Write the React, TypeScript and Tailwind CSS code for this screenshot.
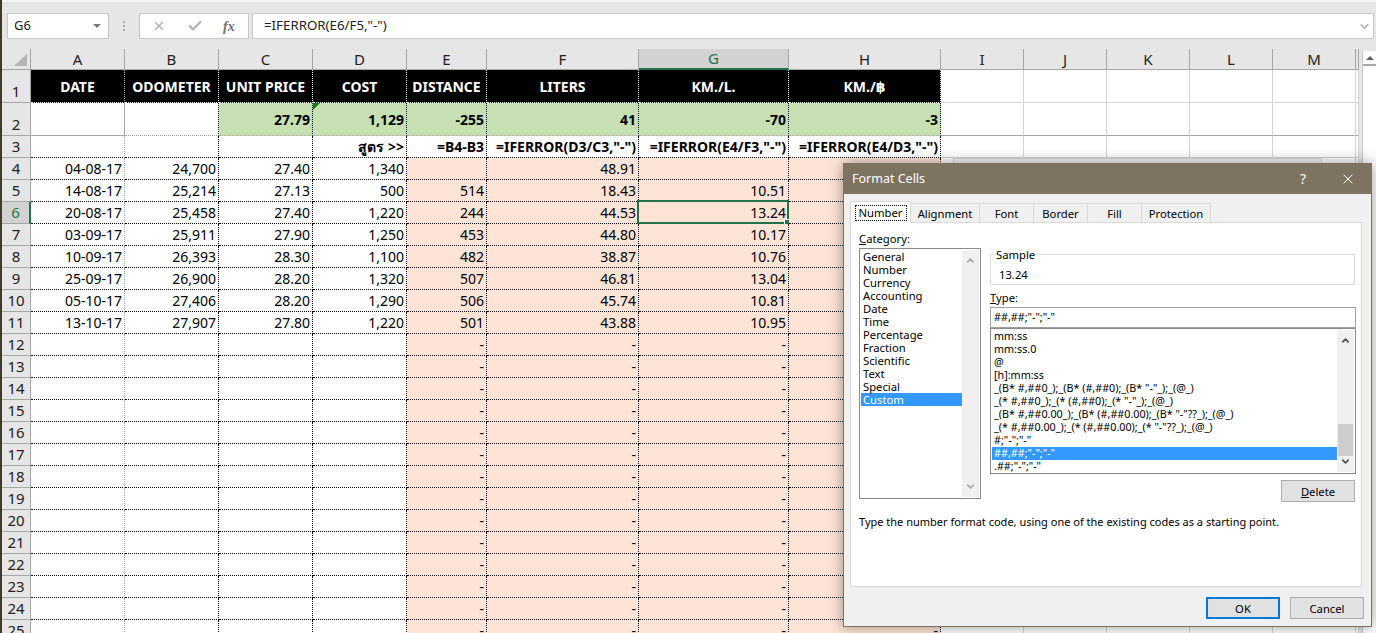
import { Check, ChevronDown, ChevronUp, X } from "lucide-react";

const columns = ["A", "B", "C", "D", "E", "F", "G", "H", "I", "J", "K", "L", "M", ""];

const headings = ["DATE", "ODOMETER", "UNIT PRICE", "COST", "DISTANCE", "LITERS", "KM./L.", "KM./฿"];
const totals = ["", "", "27.79", "1,129", "-255", "41", "-70", "-3"];
const formulas = ["", "", "", "สูตร >>", "=B4-B3", '=IFERROR(D3/C3,"-")', '=IFERROR(E4/F3,"-")', '=IFERROR(E4/D3,"-")'];

const records = [
  ["04-08-17", "24,700", "27.40", "1,340", "", "48.91", "", ""],
  ["14-08-17", "25,214", "27.13", "500", "514", "18.43", "10.51", ""],
  ["20-08-17", "25,458", "27.40", "1,220", "244", "44.53", "13.24", ""],
  ["03-09-17", "25,911", "27.90", "1,250", "453", "44.80", "10.17", ""],
  ["10-09-17", "26,393", "28.30", "1,100", "482", "38.87", "10.76", ""],
  ["25-09-17", "26,900", "28.20", "1,320", "507", "46.81", "13.04", ""],
  ["05-10-17", "27,406", "28.20", "1,290", "506", "45.74", "10.81", ""],
  ["13-10-17", "27,907", "27.80", "1,220", "501", "43.88", "10.95", ""],
];

const categories = ["General", "Number", "Currency", "Accounting", "Date", "Time", "Percentage", "Fraction", "Scientific", "Text", "Special", "Custom"];

const formats = [
  "mm:ss",
  "mm:ss.0",
  "@",
  "[h]:mm:ss",
  '_(B* #,##0_);_(B* (#,##0);_(B* "-"_);_(@_)',
  '_(* #,##0_);_(* (#,##0);_(* "-"_);_(@_)',
  '_(B* #,##0.00_);_(B* (#,##0.00);_(B* "-"??_);_(@_)',
  '_(* #,##0.00_);_(* (#,##0.00);_(* "-"??_);_(@_)',
  '#;"-";"-"',
  '##,##;"-";"-"',
  '.##;"-";"-"',
];

const tabs = [
  { label: "Alignment", width: "w-[69px]" },
  { label: "Font", width: "w-[54px]" },
  { label: "Border", width: "w-[54px]" },
  { label: "Fill", width: "w-[54px]" },
  { label: "Protection", width: "w-[69px]" },
];

function rightBorder(col: number, row: number) {
  if (col === 0) return "border-r border-r-[#a6a6a6]";
  if (col >= 8) return "border-r border-r-[#d4d4d4]";
  return row === 1 ? "border-r border-dotted border-r-white" : "border-r border-dotted border-r-black";
}

function bottomBorder(col: number, row: number) {
  if (row === 2) return "border-b border-b-[#a6a6a6]";
  if (col >= 8) return "border-b border-b-[#d4d4d4]";
  return row === 1 ? "border-b border-dotted border-b-white" : "border-b border-dotted border-b-black";
}

function fill(col: number, row: number) {
  if (col >= 8) return "bg-white";
  if (row === 1) return "bg-black text-white";
  if (row === 2) return col >= 2 ? "bg-[#c6e0b4]" : "bg-white";
  if (row === 3) return "bg-white";
  return col >= 4 ? "bg-[#fde4d6]" : "bg-white";
}

function cellText(col: number, row: number) {
  if (col >= 8) return "";
  if (row === 1) return headings[col];
  if (row === 2) return totals[col];
  if (row === 3) return formulas[col];
  if (row <= 11) return records[row - 4][col];
  return col >= 4 ? "-" : "";
}

function Cell({ col, row }: { col: number; row: number }) {
  const align = row === 1 ? "justify-center font-bold" : row <= 3 ? "justify-end pr-[2px] font-bold" : "justify-end pr-[2px]";
  return (
    <div className={`relative flex items-center whitespace-nowrap text-[14px] text-black ${align} ${fill(col, row)} ${rightBorder(col, row)} ${bottomBorder(col, row)}`}>
      {cellText(col, row)}
      {row === 2 && col === 3 && (
        <svg viewBox="0 0 7 7" className="absolute left-0 top-0 size-[7px]">
          <polygon points="0,0 7,0 0,7" fill="#0b7d0b" />
        </svg>
      )}
      {row === 6 && col === 6 && (
        <div className="absolute -left-[2px] -right-[1px] -top-[2px] -bottom-[1px] border-2 border-[#217346]">
          <div className="absolute -bottom-[3px] -right-[3px] size-[6px] border border-white bg-[#217346]" />
        </div>
      )}
    </div>
  );
}

function ColumnHeader({ label, active }: { label: string; active: boolean }) {
  return (
    <div
      className={
        active
          ? "flex items-center justify-center border-b-2 border-r border-b-[#217346] border-r-[#a6a6a6] bg-[#d2d2d2] text-[15px] text-[#217346]"
          : "flex items-center justify-center border-b border-r border-b-[#a6a6a6] border-r-[#a6a6a6] text-[15px] text-[#222222]"
      }
    >
      {label}
    </div>
  );
}

function RowHeader({ row }: { row: number }) {
  return (
    <div
      className={
        row === 6
          ? "flex items-end justify-center border-b border-r-2 border-b-[#a6a6a6] border-r-[#217346] bg-[#d2d2d2] text-[15px] leading-[21px] text-[#217346]"
          : "flex items-end justify-center border-b border-r border-[#a6a6a6] text-[15px] leading-[21px] text-[#222222]"
      }
    >
      {row}
    </div>
  );
}

function FormulaBar() {
  return (
    <div className="flex h-[49px] shrink-0 border-t-2 border-t-[#f4f4f4] pl-[5px] pt-[11px]">
      <div className="flex h-[26px] w-[102px] items-center justify-between border border-[#c8c8c8] bg-white pl-[6px] pr-[7px] text-[13px] text-[#222222]">
        G6
        <div className="h-0 w-0 border-x-[4px] border-t-[4px] border-x-transparent border-t-[#777777]" />
      </div>
      <div className="ml-[13px] flex h-[26px] w-[4px] flex-col items-center justify-center gap-[2px]">
        <div className="size-[2px] bg-[#a8a8a8]" />
        <div className="size-[2px] bg-[#a8a8a8]" />
        <div className="size-[2px] bg-[#a8a8a8]" />
      </div>
      <div className="ml-[13px] flex h-[26px] w-[110px] items-center border border-[#c8c8c8] bg-white text-[#b4b4b4]">
        <X size={14} strokeWidth={2.5} className="ml-[12px]" />
        <Check size={16} strokeWidth={3.5} className="ml-[21px]" />
        <span className="ml-[20px] font-['Liberation_Serif',serif] text-[14px] font-bold italic text-[#707070]">fx</span>
      </div>
      <div className="ml-[3px] flex h-[26px] w-[1122px] items-center justify-between border border-[#c8c8c8] bg-white pl-[11px] pr-[2px] text-[13.3px] text-[#222222]">
        =IFERROR(E6/F5,"-")
        <ChevronDown size={13} strokeWidth={3} className="text-[#b4b4b4]" />
      </div>
    </div>
  );
}

function Sheet() {
  const rows = Array.from({ length: 25 }, (_, i) => i + 1);
  return (
    <div className="flex min-h-0 flex-1">
      <div className="grid grid-cols-[29px_94px_94px_94px_94px_80px_152px_150px_152px_83px_83px_83px_83px_83px_3px] grid-rows-[21px_33px_33px_repeat(23,22px)]">
        <div className="flex items-end justify-end border-b border-r border-[#a6a6a6] pb-[3px] pr-[3px]">
          <svg viewBox="0 0 13 12" className="h-[12px] w-[13px]">
            <polygon points="13,0 13,12 0,12" fill="#b5b5b5" />
          </svg>
        </div>
        {columns.map((label, i) => (
          <ColumnHeader key={i} label={label} active={label === "G"} />
        ))}
        {rows.map((row) => (
          <div key={row} className="contents">
            <RowHeader row={row} />
            {columns.map((_, col) => (
              <Cell key={col} col={col} row={row} />
            ))}
          </div>
        ))}
      </div>
      <div className="ml-[3px] mt-[2px] flex w-[14px] flex-col border-l border-[#c8c8c8] bg-white">
        <div className="flex h-[15px] items-center justify-center border-b-2 border-[#a6a6a6]">
          <div className="h-0 w-0 border-x-[4px] border-b-[4px] border-x-transparent border-b-[#606060]" />
        </div>
      </div>
    </div>
  );
}

function ListScrollbar({ muted, children }: { muted?: boolean; children?: React.ReactNode }) {
  const tone = muted ? "text-[#a8a8a8]" : "text-[#505050]";
  return (
    <div className={`relative flex w-[17px] shrink-0 flex-col items-center justify-between bg-[#f0f0f0] py-[5px] ${tone}`}>
      <ChevronUp size={11} strokeWidth={3.5} />
      {children}
      <ChevronDown size={11} strokeWidth={3.5} />
    </div>
  );
}

function DialogButton({ label, primary }: { label: React.ReactNode; primary?: boolean }) {
  return (
    <button
      type="button"
      className={
        primary
          ? "h-[22px] w-[74px] border-2 border-[#0078d7] bg-[#e1e1e1] text-[11.25px] text-black"
          : "h-[22px] w-[74px] border border-[#adadad] bg-[#e1e1e1] text-[11.25px] text-black"
      }
    >
      {label}
    </button>
  );
}

function FormatCellsDialog() {
  return (
    <div className="absolute left-[843px] top-[163px] flex h-[464px] w-[529px] flex-col border border-t-0 border-[#7e7360] bg-[#f0f0f0] font-['Noto_Sans',sans-serif] text-[11.25px] leading-[13px] text-black shadow-[0_0_14px_rgba(0,0,0,0.4)]">
      <div className="-mx-[1px] flex h-[31px] shrink-0 items-center bg-[#7e7360] pl-[9px] text-[12.5px] text-white">
        Format Cells
        <span className="ml-auto mr-[34px] text-[14px]">?</span>
        <X size={16} strokeWidth={1.5} className="mr-[16px]" />
      </div>

      <div className="ml-[6px] mt-[7px] flex h-[22px] items-start">
        <div className="relative z-10 flex h-[22px] w-[61px] items-center justify-center border border-b-0 border-[#d9d9d9] bg-white">
          <span className="flex h-[16px] w-[52px] items-center justify-center border border-dotted border-black">Number</span>
        </div>
        {tabs.map((tab) => (
          <div key={tab.label} className={`mt-[2px] flex h-[19px] items-center justify-center border border-b-0 border-l-0 border-[#d9d9d9] ${tab.width}`}>
            {tab.label}
          </div>
        ))}
      </div>

      <div className="-mt-[1px] ml-[6px] h-[365px] w-[512px] border border-[#d9d9d9] bg-white pl-[8px] pt-[9px]">
        <div className="flex items-start">
          <div className="w-[122px]">
            <div className="h-[13px]">
              <u>C</u>ategory:
            </div>
            <div className="mt-[3px] flex h-[251px] border border-[#8a8a8a] p-[1px]">
              <div className="flex-1">
                {categories.map((name) => (
                  <div key={name} className={name === "Custom" ? "h-[13px] bg-[#3399ff] pl-[2px] text-white" : "h-[13px] pl-[2px]"}>
                    {name}
                  </div>
                ))}
              </div>
              <ListScrollbar muted />
            </div>
          </div>

          <div className="ml-[9px] w-[366px]">
            <fieldset className="mt-[16px] h-[37px] w-[365px] border border-[#dcdcdc] pl-[8px]">
              <legend className="-ml-[3px] h-[13px] leading-[13px]">Sample</legend>
              <div className="mt-[7px]">13.24</div>
            </fieldset>
            <div className="mt-[6px] h-[13px]">
              <u>T</u>ype:
            </div>
            <div className="mt-[3px] flex h-[21px] items-center border border-[#a0a0a0] pl-[3px] text-[10.75px]">##,##;"-";"-"</div>
            <div className="flex h-[146px] border border-[#8a8a8a] p-[1px] text-[10.75px]">
              <div className="flex-1">
                {formats.map((format) => (
                  <div key={format} className={format === '##,##;"-";"-"' ? "h-[13px] bg-[#3399ff] pl-[2px] text-white" : "h-[13px] pl-[2px]"}>
                    {format}
                  </div>
                ))}
              </div>
              <ListScrollbar>
                <div className="absolute left-[1px] top-[94px] h-[32px] w-[15px] bg-[#cdcdcd]" />
              </ListScrollbar>
            </div>
            <div className="mt-[6px] flex justify-end pr-[1px]">
              <DialogButton
                label={
                  <>
                    <u>D</u>elete
                  </>
                }
              />
            </div>
          </div>
        </div>
        <p className="mt-[13px] text-[11px]">Type the number format code, using one of the existing codes as a starting point.</p>
      </div>

      <div className="ml-[362px] mt-[10px] flex gap-[10px]">
        <DialogButton label="OK" primary />
        <DialogButton label="Cancel" />
      </div>
    </div>
  );
}

export default function App() {
  return (
    <div className="relative flex h-[633px] w-[1376px] overflow-hidden bg-[#e6e6e6] font-['Noto_Sans','DejaVu_Sans',sans-serif]">
      <div className="w-[2px] shrink-0 bg-[#3d3b2e]" />
      <div className="flex min-w-0 flex-1 flex-col">
        <FormulaBar />
        <Sheet />
      </div>
      <div className="absolute left-[953px] top-[158px] h-[12px] w-[369px] border border-[#d8d8d8] bg-[#f6f6f6]" />
      <FormatCellsDialog />
    </div>
  );
}
